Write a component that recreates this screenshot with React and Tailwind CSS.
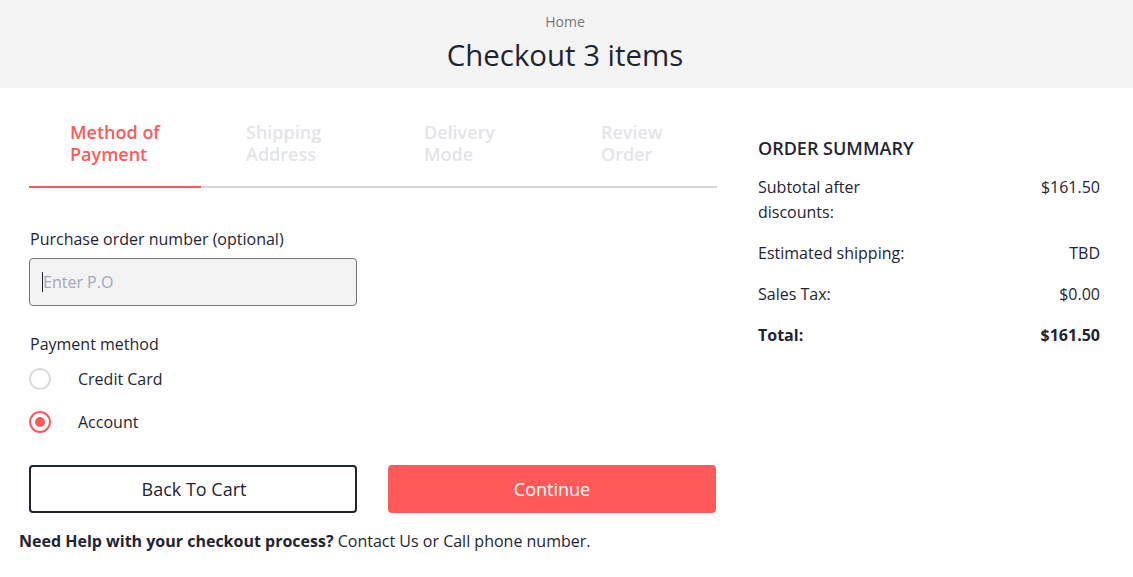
export default function App() {
  const tabs = [
    { l1: "Method of", l2: "Payment", active: true, pl: "pl-[41px]" },
    { l1: "Shipping", l2: "Address", pl: "pl-[45px]" },
    { l1: "Delivery", l2: "Mode", pl: "pl-[51px]" },
    { l1: "Review", l2: "Order", pl: "pl-[56px]" },
  ];
  return (
    <div className="min-h-[577px] bg-white text-[#1f2433]" style={{ fontFamily: '"Open Sans", sans-serif' }}>
      <header className="h-[88px] bg-[#f4f4f4] flex flex-col items-center pt-[11px] pr-[3px]">
        <div className="text-[14px] leading-[22px] text-[#767676]">Home</div>
        <h1 className="text-[29.4px] leading-[44px] text-[#1f2433]">Checkout 3 items</h1>
      </header>
      <main className="flex gap-[41px] px-[29px]">
        <section className="w-[688px] pt-[33px]">
          <div className="flex">
            {tabs.map((t, i) => (
              <div
                key={i}
                className={
                  "w-[172px] pb-[21px] border-b-2 " +
                  t.pl +
                  " " +
                  (t.active ? "border-[#ff5a5a] text-[#ff5a5a]" : "border-[#d4d5d9] text-[#e3e4e8]")
                }
              >
                <div className="text-[18px] leading-[22px] font-semibold">
                  <div>{t.l1}</div>
                  <div>{t.l2}</div>
                </div>
              </div>
            ))}
          </div>
          <div className="mt-[39px] text-[16px] leading-[24px] px-[1px]">Purchase order number (optional)</div>
          <div className="mt-[7px] w-[328px] h-[48px] rounded-[4px] border border-[#75767b] bg-[#f3f3f3] flex items-center pl-[12px]">
            <span className="w-px h-[20px] bg-[#1f2433]"></span>
            <span className="text-[16px] text-[#a3a6bd]">Enter P.O</span>
          </div>
          <div className="mt-[26px] text-[16px] leading-[24px] px-[1px]">Payment method</div>
          <div className="mt-[11px] flex items-center h-[24px]">
            <span className="w-[22px] h-[22px] rounded-full border-2 border-[#d9dadf]"></span>
            <span className="ml-[27px] text-[16px] leading-[24px]">Credit Card</span>
          </div>
          <div className="mt-[19px] flex items-center h-[24px]">
            <span className="w-[22px] h-[22px] rounded-full border-2 border-[#ff5a5a] flex items-center justify-center">
              <span className="w-[10px] h-[10px] rounded-full bg-[#ff5a5a]"></span>
            </span>
            <span className="ml-[27px] text-[16px] leading-[24px]">Account</span>
          </div>
          <div className="mt-[31px] flex gap-[31px]">
            <button className="w-[328px] h-[48px] rounded-[4px] border-2 border-[#1f2433] bg-white text-[18px] text-[#1f2433] pl-[2px]">
              Back To Cart
            </button>
            <button className="w-[328px] h-[48px] rounded-[4px] bg-[#ff5a5a] text-[18px] text-white">
              Continue
            </button>
          </div>
          <p className="mt-[16px] -ml-[10px] text-[16px] leading-[24px] whitespace-nowrap">
            <span className="font-bold">Need Help with your checkout process?</span> Contact Us or Call phone number.
          </p>
        </section>
        <aside className="w-[342px] pt-[48px]">
          <h2 className="text-[18px] leading-[24px] font-semibold">ORDER SUMMARY</h2>
          <div className="mt-[15px] flex flex-col gap-[16px] text-[16px] leading-[25px]">
            <div className="grid grid-cols-2">
              <span>Subtotal after discounts:</span>
              <span className="text-right">$161.50</span>
            </div>
            <div className="grid grid-cols-2">
              <span>Estimated shipping:</span>
              <span className="text-right">TBD</span>
            </div>
            <div className="grid grid-cols-2">
              <span>Sales Tax:</span>
              <span className="text-right">$0.00</span>
            </div>
            <div className="grid grid-cols-2 font-bold">
              <span>Total:</span>
              <span className="text-right">$161.50</span>
            </div>
          </div>
        </aside>
      </main>
    </div>
  );
}
